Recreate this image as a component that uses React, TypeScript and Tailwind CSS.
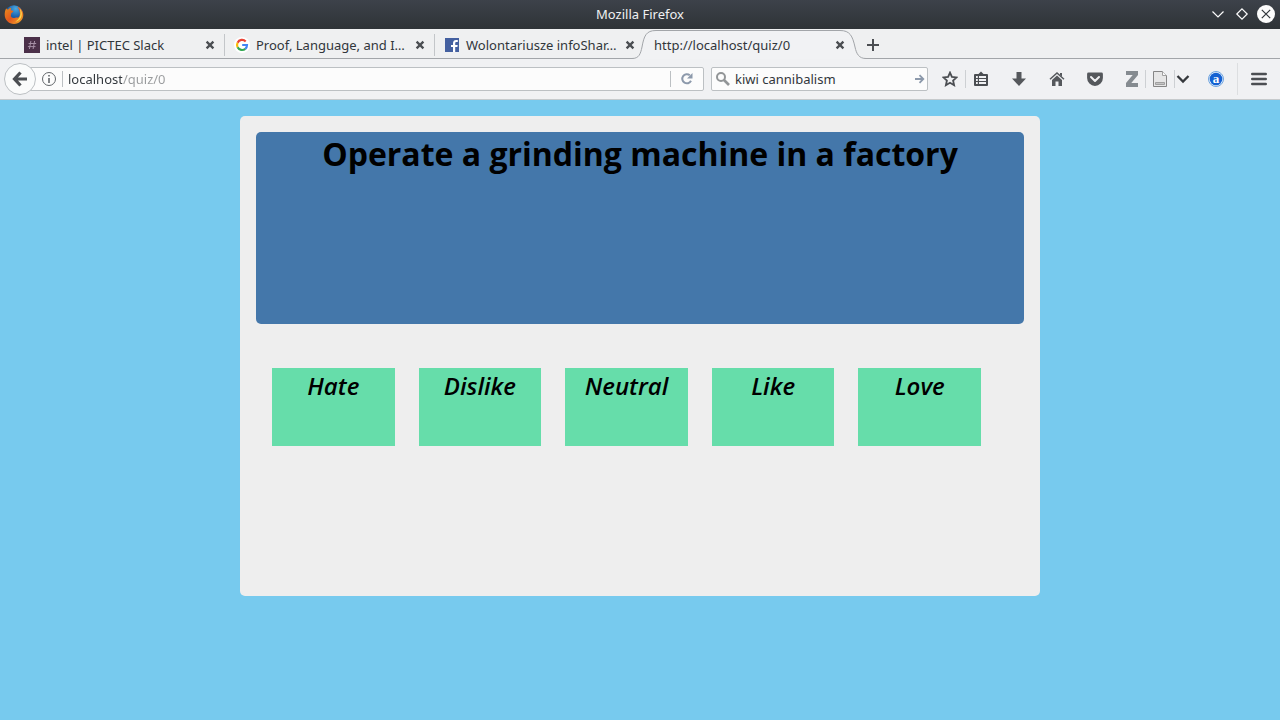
import React from "react";

const answers = ["Hate", "Dislike", "Neutral", "Like", "Love"];

function FirefoxLogo() {
  return (
    <svg viewBox="0 0 20 20" className="h-5 w-5" aria-hidden="true">
      <defs>
        <linearGradient id="fox" x1="0" y1="0" x2="1" y2="1">
          <stop offset="0" stopColor="#e8901c" />
          <stop offset="0.5" stopColor="#e2571e" />
          <stop offset="1" stopColor="#f6b42c" />
        </linearGradient>
        <radialGradient id="globe" cx="0.6" cy="0.2" r="0.9">
          <stop offset="0" stopColor="#4aa9e0" />
          <stop offset="0.5" stopColor="#1c62ae" />
          <stop offset="1" stopColor="#12356f" />
        </radialGradient>
      </defs>
      <circle cx="10" cy="9" r="8.8" fill="url(#globe)" />
      <path
        d="M2.2 3.2C2.6 4.2 3.4 4.6 4.3 4.4C5 3.6 6.2 2.8 7.2 2.8C6.8 3.6 6.6 4.6 7 5.3C7.8 5.6 9 5.6 9.4 6.2C9.2 7.1 8 7.5 7.3 8.2C7 9.3 7.3 10.4 6.7 11.1C7.5 12.9 9.3 13.4 11.2 12.8C12.4 12.3 13.4 12.4 14 12.8C15.8 11.3 16.2 9.3 15.8 7.4C15.4 5.6 14.8 3.6 13.3 1.8C16.9 3 19.4 6.2 19.3 10C19.2 15 15.1 18.9 10 18.9C4.8 18.9 0.8 15 0.7 10C0.6 7.4 1.2 5 2.2 3.2Z"
        fill="url(#fox)"
      />
      <path
        d="M15.6 3.3C18.1 5.7 18.6 9.3 17.2 12.2C16.1 14.6 13.9 16.2 11.3 16.7C14.7 14.6 16.4 12 16.5 8.6C16.5 6.6 16.2 4.8 15.6 3.3Z"
        fill="#fbd84b"
      />
    </svg>
  );
}

function SlackIcon() {
  return (
    <svg viewBox="0 0 16 16" className="h-4 w-4 shrink-0" aria-hidden="true">
      <path fill="#4b3049" d="M0 0h16v16H0z" />
      <path d="M6.9 4 5.4 12M10.6 4 9.1 12M4.6 6.5h7.6M3.9 9.6h7.6" stroke="#a58fa5" fill="none" />
    </svg>
  );
}

function GoogleIcon() {
  return (
    <svg viewBox="0 0 16 16" className="h-4 w-4 shrink-0" aria-hidden="true">
      <circle cx="8" cy="8" r="8" fill="#fff" />
      <g fill="none" strokeWidth="2.2">
        <path d="M11.7 4.4A5 5 0 0 0 3.6 5.7" stroke="#ea4335" />
        <path d="M3.6 5.7A5 5 0 0 0 3.6 10.3" stroke="#fbbc05" />
        <path d="M3.6 10.3A5 5 0 0 0 11.3 11.8" stroke="#34a853" />
        <path d="M11.3 11.8A5 5 0 0 0 13 8H8.2" stroke="#4285f4" />
      </g>
    </svg>
  );
}

function FacebookIcon() {
  return (
    <svg viewBox="0 0 16 16" className="h-4 w-4 shrink-0" aria-hidden="true">
      <path fill="#4460a0" d="M1 1h14v14H1z" />
      <path
        fill="#fff"
        d="M9 15V9.9H7V7.9h2V6.3C9 4.2 10.2 3 12.2 3h1.6v2h-1.2C11.6 5 11.2 5.4 11.2 6.3v1.6h2.5l-.3 2h-2.2V15Z"
      />
    </svg>
  );
}

function CloseTab() {
  return (
    <button type="button" aria-label="Close tab" className="h-4 w-4 shrink-0">
      <svg viewBox="0 0 16 16" className="h-4 w-4" aria-hidden="true">
        <path d="M4.6 4.6 11.4 11.4M11.4 4.6 4.6 11.4" stroke="#4b4e52" strokeWidth="2.3" fill="none" />
      </svg>
    </button>
  );
}

function Tab({ icon, title, divider }: { icon: React.ReactNode; title: string; divider: boolean }) {
  return (
    <div
      className={
        divider
          ? "mt-[5px] flex h-[22px] w-[210px] items-center border-r border-[#c3c6c9] pr-1.5 pl-[9px]"
          : "mt-[5px] flex h-[22px] w-[210px] items-center pr-[7px] pl-[9px]"
      }
    >
      {icon}
      <span className="ml-1.5 flex-1 leading-5 whitespace-nowrap">{title}</span>
      <CloseTab />
    </div>
  );
}

function Separator() {
  return <span className="h-[18px] w-px shrink-0 bg-[#cdd0d3]" />;
}

function Tool({ label, className, children }: { label: string; className: string; children: React.ReactNode }) {
  return (
    <button type="button" aria-label={label} className={className}>
      <svg viewBox="0 0 16 16" className="h-4 w-4" aria-hidden="true">
        {children}
      </svg>
    </button>
  );
}

export default function App() {
  return (
    <div className="flex min-h-screen flex-col bg-[#77caee] font-['Noto_Sans',sans-serif] text-[13px] text-[#31363b]">
      <header>
        <div className="flex h-[29px] items-center bg-linear-to-b from-[#3d424a] to-[#2e3337] px-1 text-[#eff0f1]">
          <div className="flex flex-1">
            <FirefoxLogo />
          </div>
          <span className="pb-0.5 leading-5">Mozilla Firefox</span>
          <div className="flex flex-1 items-center justify-end gap-1 pb-px">
            <button type="button" aria-label="Minimize" className="h-5 w-5">
              <svg viewBox="0 0 20 20" className="h-5 w-5" aria-hidden="true">
                <path d="M4.5 7.5 10 13 15.5 7.5" stroke="#fcfcfc" strokeWidth="1.2" fill="none" />
              </svg>
            </button>
            <button type="button" aria-label="Maximize" className="h-5 w-5">
              <svg viewBox="0 0 20 20" className="h-5 w-5" aria-hidden="true">
                <path d="M10 4.8 15.2 10 10 15.2 4.8 10Z" stroke="#fcfcfc" strokeWidth="1.2" fill="none" />
              </svg>
            </button>
            <button type="button" aria-label="Close" className="h-5 w-5">
              <svg viewBox="0 0 20 20" className="h-5 w-5" aria-hidden="true">
                <circle cx="10" cy="10" r="9" fill="#fcfcfc" />
                <path d="M5.8 5.8 14.2 14.2M14.2 5.8 5.8 14.2" stroke="#31363b" strokeWidth="1.2" fill="none" />
              </svg>
            </button>
          </div>
        </div>

        <div className="flex h-[30px] border-b border-[#a2a5a9] bg-[#eff0f1] pl-[15px]">
          <nav aria-label="Tabs" className="flex">
            <Tab icon={<SlackIcon />} title="intel | PICTEC Slack" divider />
            <Tab icon={<GoogleIcon />} title="Proof, Language, and I…" divider />
            <Tab icon={<FacebookIcon />} title="Wolontariusze infoShar…" divider={false} />
            <div className="relative mt-[5px] flex h-[22px] w-[210px] items-center pr-[7px] pl-[9px]">
              <svg
                viewBox="0 0 242 30"
                className="absolute -top-[5px] -left-4 h-[30px] w-[242px]"
                aria-hidden="true"
              >
                <path
                  d="M0 29.5H3C10 29.5 11.5 25 13 18C15 7 17 1.5 27 1.5H211C221 1.5 223.5 7 226 18C227.5 25 230 29.5 237 29.5H242V30H0Z"
                  fill="#f1f2f4"
                />
                <path
                  d="M0 29.5H3C10 29.5 11.5 25 13 18C15 7 17 1.5 27 1.5H211C221 1.5 223.5 7 226 18C227.5 25 230 29.5 237 29.5H242"
                  fill="none"
                  stroke="#a2a5a9"
                />
              </svg>
              <span className="relative flex-1 leading-5">http://localhost/quiz/0</span>
              <span className="relative flex">
                <CloseTab />
              </span>
            </div>
          </nav>
          <button type="button" aria-label="New tab" className="mt-2 ml-[11px] h-4 w-4">
            <svg viewBox="0 0 16 16" className="h-4 w-4" aria-hidden="true">
              <path d="M7 2v12M1 8h12" stroke="#4b4e52" strokeWidth="2" fill="none" />
            </svg>
          </button>
        </div>

        <div className="flex h-[41px] items-center border-b border-[#c6cacc] bg-[#f0f1f3] pl-1">
          <button
            type="button"
            aria-label="Back"
            className="z-10 flex h-8 w-8 shrink-0 items-center justify-center rounded-full border border-[#bcc0c3] bg-[#fafbfb]"
          >
            <svg viewBox="0 0 16 16" className="h-4 w-4" aria-hidden="true">
              <path d="M8.5 1.5 2.5 8l6 6.5M3 8h12" stroke="#4b4e52" strokeWidth="3.2" fill="none" />
            </svg>
          </button>
          <div className="-ml-2 flex h-6 flex-1 items-center rounded-xs border border-[#bcc0c3] bg-[#fcfcfc] pl-3">
            <svg viewBox="0 0 16 16" className="h-4 w-4 shrink-0" aria-hidden="true">
              <circle cx="8" cy="8" r="6.5" stroke="#63676b" fill="none" />
              <path d="M7.2 4h1.6v1.6H7.2zM7.2 6.9h1.6V12H7.2z" fill="#63676b" />
            </svg>
            <span className="mx-[5px] h-4 w-px bg-[#bcc0c3]" />
            <input
              aria-label="Address"
              defaultValue="localhost/quiz/0"
              className="h-5 min-w-0 flex-1 bg-linear-to-r from-[#31363b] from-[54px] to-[#999b9d] to-[54px] bg-clip-text text-transparent caret-black outline-none"
            />
            <span className="h-4 w-px bg-[#bcc0c3]" />
            <button type="button" aria-label="Reload" className="flex w-8 justify-center">
              <svg viewBox="0 0 16 16" className="h-4 w-4" aria-hidden="true">
                <path d="M10.8 4.2A4.6 4.6 0 1 0 12 9.8" stroke="#8c99ab" strokeWidth="2" fill="none" />
                <path d="M13.5 2v5.5H8Z" fill="#8c99ab" />
              </svg>
            </button>
          </div>

          <div className="ml-[7px] flex h-6 w-[217px] items-center rounded-xs border border-[#bcc0c3] bg-[#fcfcfc] pl-[3px]">
            <svg viewBox="0 0 16 16" className="h-4 w-4 shrink-0" aria-hidden="true">
              <circle cx="6" cy="6" r="4" stroke="#929597" strokeWidth="2" fill="none" />
              <path d="m9 9 5 5" stroke="#929597" strokeWidth="2.6" fill="none" />
            </svg>
            <input
              aria-label="Search"
              defaultValue="kiwi cannibalism"
              className="ml-1 h-5 min-w-0 flex-1 bg-transparent outline-none"
            />
            <button type="button" aria-label="Run search" className="h-4 w-4 shrink-0">
              <svg viewBox="0 0 16 16" className="h-4 w-4" aria-hidden="true">
                <path d="M4 8h8M8.5 4.2 12.3 8 8.5 11.8" stroke="#8c99ab" strokeWidth="1.8" fill="none" />
              </svg>
            </button>
          </div>

          <div className="flex h-full items-center pl-3.5">
            <Tool label="Bookmark this page" className="h-4 w-4">
              <path
                d="M8 1.6 9.9 5.9 14.6 6.4 11.1 9.5 12.1 14.2 8 11.8 3.9 14.2 4.9 9.5 1.4 6.4 6.1 5.9Z"
                fill="none"
                stroke="#4b4e52"
                strokeWidth="1.8"
              />
            </Tool>
            <span className="ml-[7px] flex">
              <Separator />
            </span>
            <Tool label="Bookmarks" className="ml-[7px] h-4 w-4">
              <path d="M2 3h3.5L8 .5 10.5 3H14a1 1 0 0 1 1 1v10a1 1 0 0 1-1 1H2a1 1 0 0 1-1-1V4a1 1 0 0 1 1-1Z" fill="#4b4e52" />
              <path d="M3 5h1.8v2H3zM6 5h7v2H6zM3 8h1.8v2H3zM6 8h7v2H6zM3 11h1.8v2H3zM6 11h7v2H6z" fill="#f0f1f3" />
            </Tool>
            <Tool label="Downloads" className="ml-[22px] h-4 w-4">
              <path d="M5.5 1h5v6.5H15L8 15 1 7.5h4.5Z" fill="#55585c" />
            </Tool>
            <Tool label="Home" className="ml-[22px] h-4 w-4">
              <path d="M1 8.2 8 2l7 6.2" fill="none" stroke="#55585c" strokeWidth="1.5" />
              <path d="M11 2h2v3.5L11 4Z" fill="#55585c" />
              <path d="m3 9 5-4.5L13 9v6H9.5v-4.5h-3V15H3Z" fill="#55585c" />
            </Tool>
            <Tool label="Save to Pocket" className="ml-[22px] h-4 w-4">
              <path d="M1.5 1.5h13a1.4 1.4 0 0 1 1.4 1.4V7a7.9 7.9 0 0 1-15.8 0V2.9A1.4 1.4 0 0 1 1.5 1.5Z" fill="#55585c" />
              <path d="m4 6 4 4 4-4" fill="none" stroke="#f0f1f3" strokeWidth="2" strokeLinecap="round" strokeLinejoin="round" />
            </Tool>
            <Tool label="Zotero" className="ml-[21px] h-4 w-4">
              <path d="M2 0h12v4L7.3 12H14v4H2v-4L8.7 4H2Z" fill="#858b90" />
            </Tool>
            <span className="ml-[5px] flex">
              <Separator />
            </span>
            <Tool label="Save item" className="ml-1.5 h-4 w-4">
              <path d="M1.5.5h9l4 4v11h-13Z" fill="#e6e6e6" stroke="#858585" />
              <path d="M10.5.5v4h4" fill="#fafafa" stroke="#a0a0a0" />
              <path d="M3.5 11.5h9v2h-9z" fill="#c4c4c4" stroke="#a0a0a0" />
            </Tool>
            <span className="ml-1.5 flex">
              <Separator />
            </span>
            <Tool label="Save options" className="h-4 w-4">
              <path d="m2.5 5 5.5 5.5L13.5 5" fill="none" stroke="#35383c" strokeWidth="2.3" />
            </Tool>
            <button type="button" aria-label="Add-on" className="ml-[17px] h-4 w-4">
              <svg viewBox="0 0 16 16" className="h-4 w-4" aria-hidden="true">
                <circle cx="8" cy="8" r="7.5" fill="#e4effb" stroke="#6fa4de" />
                <circle cx="8" cy="8" r="6.3" fill="#1461d2" />
                <text x="8" y="11.5" textAnchor="middle" fontFamily="Liberation Serif, serif" fontWeight="700" fontSize="13" fill="#fff">
                  a
                </text>
              </svg>
            </button>
            <span className="ml-[13px] h-8 w-px bg-[#dcdee0]" />
            <Tool label="Menu" className="mr-[13px] ml-[13px] h-4 w-4">
              <path d="M1.3 3h13.4M1.3 8h13.4M1.3 13h13.4" stroke="#4b4e52" strokeWidth="2.6" strokeLinecap="round" />
            </Tool>
          </div>
        </div>
      </header>

      <main className="mx-auto my-4 min-h-[480px] w-full max-w-[800px] rounded-[5px] bg-[#eeeeee] p-4 font-['Open_Sans',sans-serif] text-black">
        <section className="min-h-48 rounded-[5px] bg-[#4477aa] text-center">
          <h1 className="text-[32px] leading-[44px] font-bold">Operate a grinding machine in a factory</h1>
        </section>
        <div className="mt-11 ml-4 grid max-w-[709px] grid-cols-5 gap-6">
          {answers.map((answer) => (
            <button
              key={answer}
              type="button"
              className="flex h-[78px] items-start justify-center bg-[#66ddaa] text-2xl leading-9 font-semibold italic"
            >
              {answer}
            </button>
          ))}
        </div>
      </main>
    </div>
  );
}
